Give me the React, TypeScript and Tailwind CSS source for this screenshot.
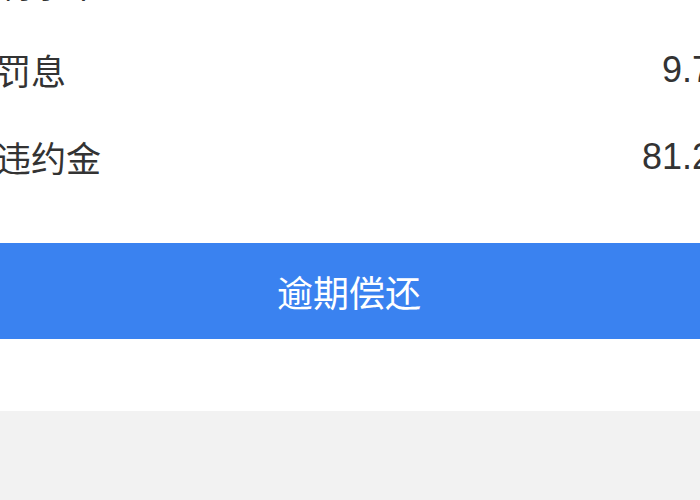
import React from "react";

const font = { fontFamily: '"Noto Sans CJK SC", "Noto Sans", sans-serif' };

function Row({ label, value, shift }: { label: string; value: string; shift?: boolean }) {
  return (
    <div className="flex h-[87px] items-center justify-between">
      <span className={`text-[35px] leading-none text-[#333333] ${shift ? "-mt-[1px]" : ""}`}>{label}</span>
      <span
        className="text-[36px] leading-none text-[#333333]"
        style={{ fontFamily: '"Liberation Sans", Arial, sans-serif' }}
      >
        {value}
      </span>
    </div>
  );
}

export default function App() {
  return (
    <div className="relative h-[500px] w-[700px] overflow-hidden bg-[#f2f2f2]" style={font}>
      <div className="-mt-[61px] -ml-[4px] w-[736px] bg-white">
        <Row label="剩余本金" value="" shift />
        <Row label="罚息" value="9.72" />
        <Row label="违约金" value="81.23" />
        <div className="h-[43px]" />
        <div className="flex h-[96px] items-center justify-center bg-[#3a82f0] pr-[30px]">
          <span className="text-[36px] leading-none text-white">逾期偿还</span>
        </div>
        <div className="h-[72px]" />
      </div>
    </div>
  );
}
